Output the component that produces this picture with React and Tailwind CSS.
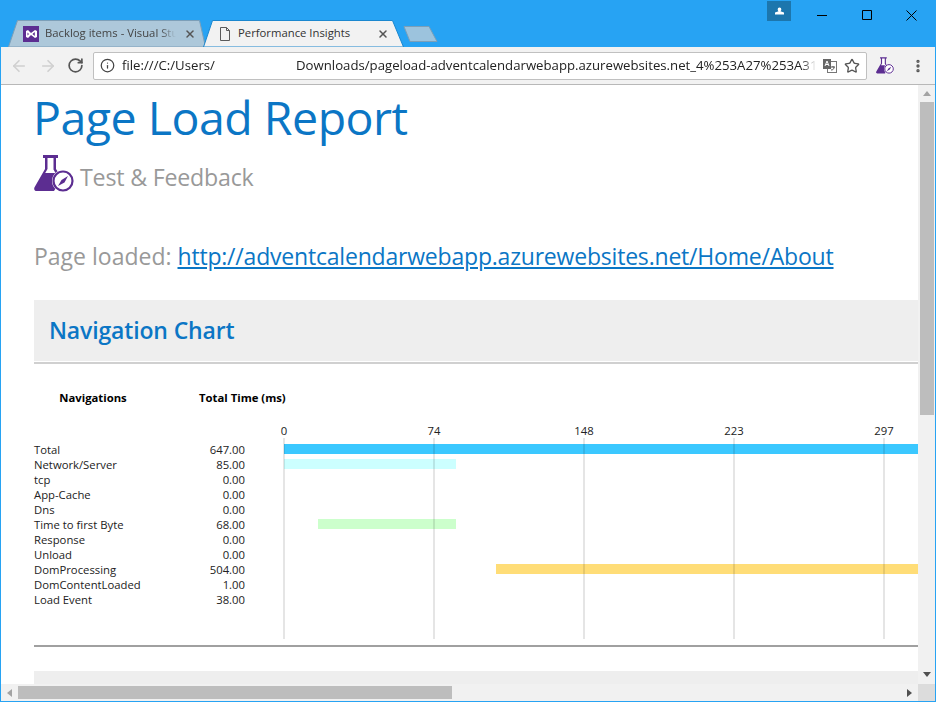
import React from 'react';
import { ArrowLeft, ArrowRight, RotateCw, Info, Star, X, EllipsisVertical } from 'lucide-react';

const FONT = "font-['Open_Sans','Noto_Sans',sans-serif]";

const ROWS = [
  { name: 'Total', time: '647.00', left: 0, width: 634, color: 'bg-[#3bc8ff]' },
  { name: 'Network/Server', time: '85.00', left: 0, width: 172, color: 'bg-[#ccffff]' },
  { name: 'tcp', time: '0.00' },
  { name: 'App-Cache', time: '0.00' },
  { name: 'Dns', time: '0.00' },
  { name: 'Time to first Byte', time: '68.00', left: 34, width: 138, color: 'bg-[#ccffcc]' },
  { name: 'Response', time: '0.00' },
  { name: 'Unload', time: '0.00' },
  { name: 'DomProcessing', time: '504.00', left: 212, width: 422, color: 'bg-[#ffdd77]' },
  { name: 'DomContentLoaded', time: '1.00' },
  { name: 'Load Event', time: '38.00' },
];

const TICKS = [
  { label: '0', x: 0 },
  { label: '74', x: 150 },
  { label: '148', x: 300 },
  { label: '223', x: 450 },
  { label: '297', x: 600 },
];

const FlaskIcon = ({ className }) => (
  <svg viewBox="0 0 40 37" className={className}>
    <path d="M9 0h15v3h-2v11l6 9-8 13H3c-2.500 0-3.500-2-2.300-4L11 14V3H9z" fill="#5c2d91" />
    <path d="M13.500 3h6v11.600l2 3.400H11.200l2.300-3.900z" fill="#fff" />
    <circle cx="29" cy="26" r="11" fill="#fff" />
    <circle cx="29" cy="26" r="9.500" fill="none" stroke="#5c2d91" strokeWidth="2.200" />
    <path d="M34 21l-3.500 6.500-3-2.500zM24 31l3.500-6 3 2.500z" fill="#5c2d91" />
  </svg>
);

const VsIcon = () => (
  <svg viewBox="0 0 16 16" className="w-4 h-4 shrink-0">
    <rect width="16" height="16" fill="#5c2d91" />
    <path d="M3 5l2-1 3 3 4-3 2 1v6l-2 1-4-3-3 3-2-1zM4.500 6.500v3L6 8zM11.800 6L9.400 8l2.400 2z" fill="#fff" fillRule="evenodd" />
  </svg>
);

const PageIcon = () => (
  <svg viewBox="0 0 12 14" className="w-3 h-[14px] shrink-0" fill="none" stroke="#5a5a5a">
    <path d="M1.500 .5h6l3 3v10h-9zM7.500 .5v3h3" />
  </svg>
);

const BackgroundTab = () => (
  <div className="relative flex items-center h-[27px] w-[198px] pl-[15px] pr-[10px]">
    <svg viewBox="0 0 198 27" className="absolute inset-0 w-full h-full">
      <path d="M.5 27L9.500.5h182l6 26.500z" fill="#adc8da" stroke="#7c9fb8" />
    </svg>
    <div className="relative shrink-0"><VsIcon /></div>
    <span className="relative ml-[6px] flex-1 overflow-hidden whitespace-nowrap text-[11.3px] text-[#444] [mask-image:linear-gradient(to_right,#000_88%,transparent)]">Backlog items - Visual Studio</span>
    <X size={12} strokeWidth={3} className="relative ml-[8px] text-[#555] shrink-0" />
  </div>
);

const ActiveTab = () => (
  <div className="relative z-10 flex items-center h-[27px] w-[201px] -ml-[3px] pl-[16px] pr-[15px]">
    <svg viewBox="0 0 201 27" className="absolute inset-0 w-full h-full">
      <path d="M.5 27L9.500.5h180L200.500 27z" fill="#f2f2f2" stroke="#1b87cf" />
    </svg>
    <div className="relative shrink-0"><PageIcon /></div>
    <span className="relative ml-[7px] flex-1 whitespace-nowrap text-[11.3px] text-[#333]">Performance Insights</span>
    <X size={12} strokeWidth={3} className="relative text-[#555] shrink-0" />
  </div>
);

const WindowControls = () => (
  <div className="absolute right-[1px] top-0 flex items-start">
    <div className="w-[24px] h-[20px] bg-[#1c76ad] flex items-center justify-center mt-[1px] mr-[8px]">
      <svg viewBox="0 0 10 8" className="w-[9px] h-[8px]"><path d="M5 0a2 2 0 012 2.200c0 1-.5 1.600-1 2l4 1.600V8H0V5.800l4-1.600c-.5-.4-1-1-1-2A2 2 0 015 0z" fill="#fff" /></svg>
    </div>
    <div className="w-[45px] h-[30px] flex items-center justify-center">
      <svg viewBox="0 0 10 10" className="w-[10px] h-[10px]" stroke="#000" fill="none"><path d="M0 5.500h10" /></svg>
    </div>
    <div className="w-[45px] h-[30px] flex items-center justify-center">
      <svg viewBox="0 0 10 10" className="w-[10px] h-[10px]" stroke="#000" fill="none"><path d="M.5 .5h9v9h-9z" /></svg>
    </div>
    <div className="w-[45px] h-[30px] flex items-center justify-center">
      <svg viewBox="0 0 11 11" className="w-[11px] h-[11px]" stroke="#000" fill="none"><path d="M.5 .5l10 10M10.500 .5l-10 10" /></svg>
    </div>
  </div>
);

const ChromeBar = () => (
  <div className="shrink-0">
    <div className="h-[47px] bg-[#27a3f3] flex items-end relative pl-[7px]">
      <BackgroundTab />
      <ActiveTab />
      <svg viewBox="0 0 36 16" className="w-[36px] h-[16px] -ml-[1px] mb-[5px]">
        <path d="M1 .5h25l8 15H7z" fill="#9cc3dd" stroke="#7c9fb8" />
      </svg>
      <WindowControls />
    </div>
    <div className="h-[38px] bg-[#f2f2f2] border-b border-[#b8b8b8] flex items-center pl-[9px]">
      <ArrowLeft size={18} strokeWidth={2.200} className="text-[#d0d0d0]" />
      <ArrowRight size={18} strokeWidth={2.200} className="text-[#d0d0d0] ml-[11px]" />
      <RotateCw size={17} strokeWidth={2.400} className="text-[#555] ml-[10px]" />
      <div className="ml-[9px] w-[774px] h-[28px] bg-white border border-[#c0c0c0] rounded-[2px] flex items-center pl-[6px]">
        <Info size={15} strokeWidth={2} className="text-[#444] shrink-0" />
        <div className="ml-[7px] w-[694px] text-[13.2px] text-[#222] whitespace-nowrap overflow-hidden [mask-image:linear-gradient(to_right,#000_98%,transparent)]">
          <span className="inline-block w-[174px]">file:///C:/Users/</span>
          <span>Downloads/pageload-adventcalendarwebapp.azurewebsites.net_4%253A27%253A31</span>
        </div>
        <svg viewBox="0 0 14 14" className="w-[14px] h-[14px] ml-[7px] shrink-0">
          <rect x="4.500" y="2.500" width="9" height="11" fill="#fff" stroke="#777" />
          <rect x="0" y="0" width="8" height="10" fill="#666" />
          <path d="M2 7l2-5 2 5M3 5.500h2" stroke="#fff" fill="none" />
          <path d="M8 8h4M10 7v1M11 8c0 2-1 3-3 3" stroke="#555" fill="none" />
        </svg>
        <Star size={16} strokeWidth={2} className="text-[#555] ml-[7px] shrink-0" />
      </div>
      <FlaskIcon className="w-[18px] h-[17px] ml-[9px] shrink-0" />
      <EllipsisVertical size={16} strokeWidth={3} className="text-[#555] ml-[16px] shrink-0" />
    </div>
  </div>
);

const Chart = () => (
  <div className="text-[11.3px] leading-[15px] text-[#222]">
    <div className="flex font-bold text-black pt-[26px] h-[60px]">
      <div className="w-[118px] text-center">Navigations</div>
      <div className="ml-[47px]">Total Time (ms)</div>
    </div>
    <div className="relative h-[215px]">
      <div className="pt-[18px]">
        {ROWS.map((r) => (
          <div key={r.name} className="relative h-[15px] flex">
            <div className="w-[150px] whitespace-nowrap">{r.name}</div>
            <div className="w-[61px] text-right">{r.time}</div>
            {r.color && (
              <div className={`absolute top-[2px] h-[10px] ${r.color}`} style={{ left: 250 + r.left, width: r.width }} />
            )}
          </div>
        ))}
      </div>
      {TICKS.map((t) => (
        <div key={t.label} className="absolute top-0 bottom-0 w-[2px] flex flex-col items-center" style={{ left: 249 + t.x }}>
          <span className="leading-[13px] h-[14px] w-[40px] shrink-0 text-center">{t.label}</span>
          <div className="w-[2px] flex-1 bg-black/10" />
        </div>
      ))}
    </div>
  </div>
);

const HorizontalScrollbar = () => (
  <div className="h-[17px] bg-[#f1f1f1] flex items-center shrink-0">
    <div className="w-[17px] flex items-center pl-[6px]">
      <div className="w-0 h-0 border-y-[4px] border-y-transparent border-r-[5px] border-r-[#a3a3a3]" />
    </div>
    <div className="w-[434px] h-[13px] bg-[#bdbdbd]" />
    <div className="flex-1 flex justify-end pr-[6px]">
      <div className="w-0 h-0 border-y-[4px] border-y-transparent border-l-[5px] border-l-[#505050]" />
    </div>
  </div>
);

const VerticalScrollbar = () => (
  <div className="w-[17px] shrink-0 flex flex-col bg-[#f1f1f1]">
    <div className="h-[17px] flex items-center justify-center">
      <div className="w-0 h-0 border-x-[4px] border-x-transparent border-b-[5px] border-b-[#a3a3a3]" />
    </div>
    <div className="h-[313px] bg-[#bdbdbd] ml-[2px] mr-[1px]" />
    <div className="flex-1 flex items-end justify-center pb-[7px]">
      <div className="w-0 h-0 border-x-[4px] border-x-transparent border-t-[5px] border-t-[#505050]" />
    </div>
    <div className="h-[17px] bg-[#dcdcdc]" />
  </div>
);

export default function App() {
  return (
    <div className={`w-[936px] h-[702px] overflow-hidden flex flex-col bg-white border-x border-b border-[#27a3f3] ${FONT}`}>
      <ChromeBar />
      <div className="flex-1 flex min-h-0">
        <div className="flex-1 min-w-0 flex flex-col">
          <div className="flex-1 min-h-0 overflow-hidden pl-[33px]">
            <h1 className="text-[46.5px] leading-[64px] -ml-[1px] text-[#0b76c5] tracking-[-0.5px]">Page Load Report</h1>
            <div className="flex items-start mt-[6px] h-[42px]">
              <FlaskIcon className="w-[40px] h-[37px] shrink-0" />
              <span className="ml-[6px] mt-[4px] text-[23.2px] leading-[37px] text-[#999] tracking-[-0.2px]">Test &amp; Feedback</span>
            </div>
            <div className="mt-[41px] text-[23px] leading-[36px] text-[#999] whitespace-nowrap">
              Page loaded: <a href="#about" className="text-[#0b76c5] underline tracking-[-0.2px]">http://adventcalendarwebapp.azurewebsites.net/Home/About</a>
            </div>
            <div className="mt-[26px] h-[61px] bg-[#eeeeee] flex items-center pl-[15px]">
              <h2 className="text-[23px] font-semibold text-[#0b76c5] tracking-[-0.15px]">Navigation Chart</h2>
            </div>
            <div className="h-[2px] mt-[1px] bg-[#d0d0d0]" />
            <Chart />
            <div className="h-[2px] mt-[6px] bg-[#a0a0a0]" />
            <div className="mt-[24px] h-[20px] bg-[#eeeeee]" />
          </div>
          <HorizontalScrollbar />
        </div>
        <VerticalScrollbar />
      </div>
    </div>
  );
}
